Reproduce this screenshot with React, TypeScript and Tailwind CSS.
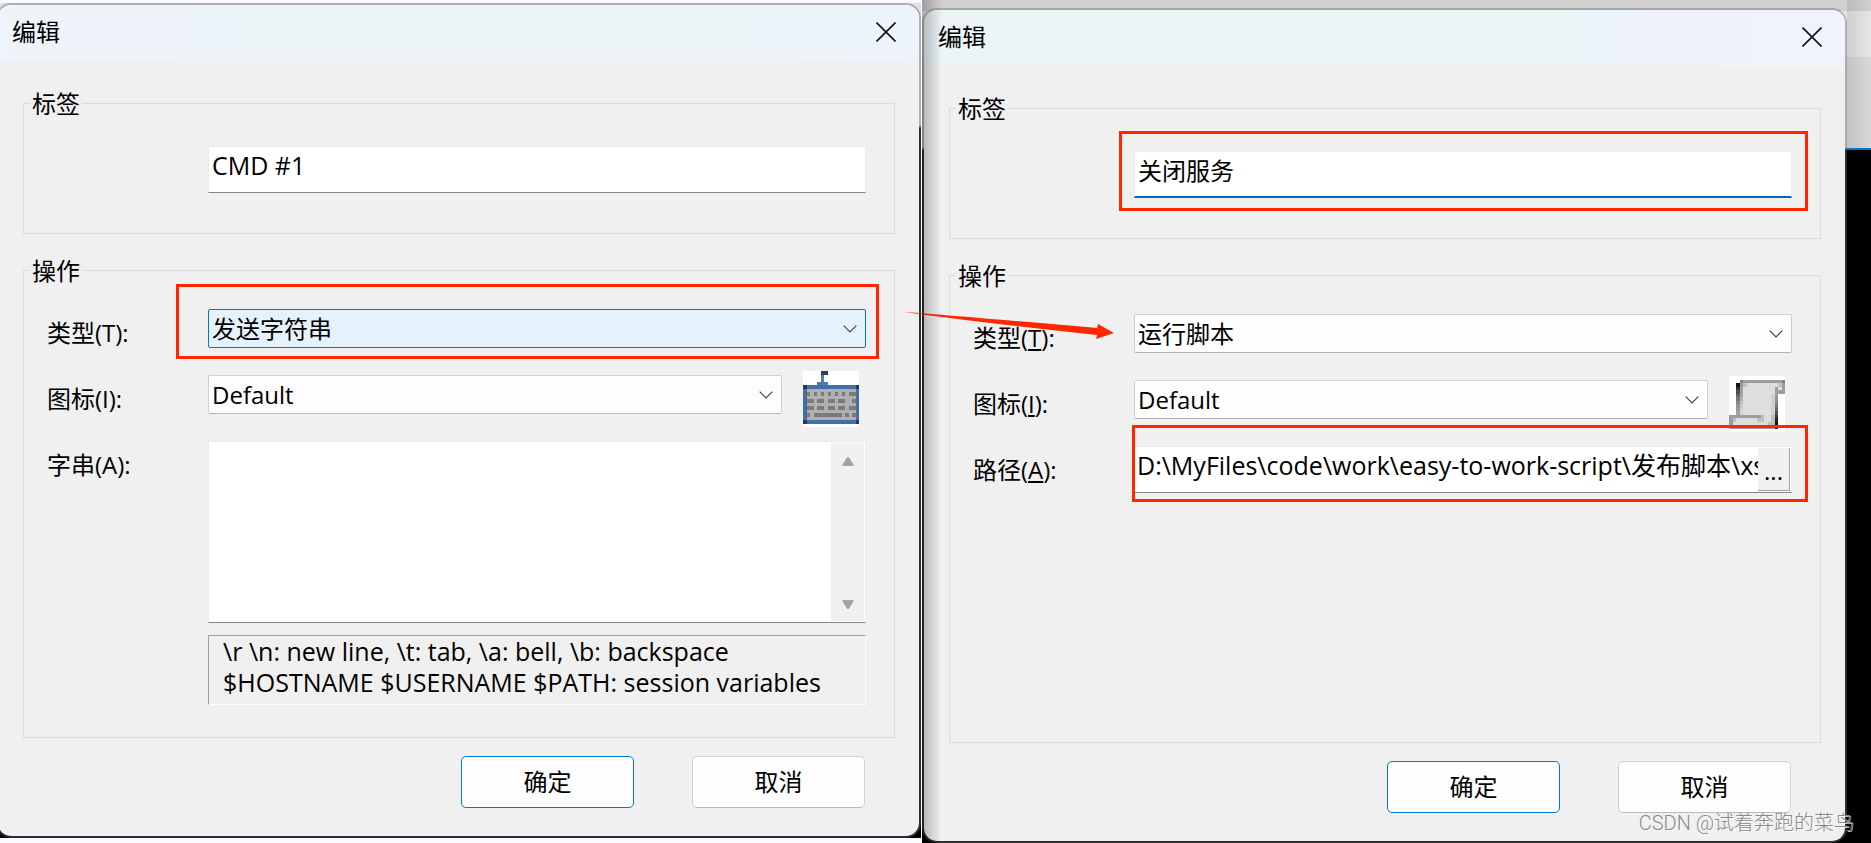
import { useState } from "react";
import type { ReactNode } from "react";

const CloseIcon = () => (
  <svg className="size-5" viewBox="0 0 20 20" fill="none" stroke="#111" strokeWidth="1.6">
    <path d="M0.5 0.5 19.5 19.5M19.5 0.5 0.5 19.5" />
  </svg>
);

const ChevronIcon = () => (
  <svg
    className="pointer-events-none absolute right-[9px] top-4 h-2 w-[14px]"
    viewBox="0 0 14 8"
    fill="none"
    stroke="#444"
    strokeWidth="1.2"
  >
    <path d="M0.7 0.7 7 7 13.3 0.7" />
  </svg>
);

// [x, y, width] of each key on the 16x16 keyboard bitmap
const keys = [
  [1, 6, 1], [3, 6, 1], [5, 6, 1], [7, 6, 1], [9, 6, 1], [11, 6, 1], [13, 6, 2],
  [1, 8, 2], [4, 8, 2], [7, 8, 2], [10, 8, 2], [14, 8, 1],
  [1, 10, 2], [4, 10, 2], [7, 10, 2], [10, 10, 2], [13, 10, 2],
  [1, 12, 1], [3, 12, 8], [12, 12, 1], [14, 12, 1],
];

const KeyboardIcon = () => (
  <svg className="size-14" viewBox="0 0 16 16" shapeRendering="crispEdges">
    <path fill="#fff" d="M0 0h16v16H0z" />
    <path fill="#4c7dac" d="M5 1h1v2H5zM4 3h3v1H4z" />
    <path fill="#243f5c" d="M5 0h2v1H5z" />
    <path fill="#4270a6" d="M0 4h16v11H0z" />
    <path fill="#b0b0b0" d="M1 5h14v9H1z" />
    <path fill="#243a55" d="M0 4h1v1H0zM15 4h1v1h-1zM0 14h1v1H0zM15 14h1v1h-1z" />
    {keys.map(([x, y, w]) => (
      <rect key={`${x}-${y}`} x={x} y={y} width={w} height="1" fill="#7b7b7b" />
    ))}
  </svg>
);

const leftShade = ["#111", "#333", "#4d4d4d", "#666", "#777", "#888", "#949494", "#9b9b9b", "#a0a0a0"];
const foldShade = ["#989c9e", "#9c9fa1", "#a2a2a2", "#aaa", "#b2b2b2", "#bcbcbc", "#c6c6c6", "#d0d0d0", "#d6d6d6"];
const rightShade = ["#9a9ea0", "#9a9ea0", "#989c9e", "#909496", "#888", "#777", "#666", "#505050", "#3a3a3a", "#222", "#111", "#111"];

const ScriptIcon = () => (
  <svg className="size-14" viewBox="0 0 16 16" shapeRendering="crispEdges">
    <path fill="#fff" d="M0 0h16v16H0z" />
    <path fill="#dedede" d="M4 2h9v12H4zM1 12h10v2H1zM13 2h2v2h-2z" />
    <path fill="#9a9ea0" d="M3 1h13v4h-2V4h1V2H3zM0 11h9v1H1v3H0zM1 14h12v1H1z" />
    <path fill="#808486" d="M3 1h1v1H3zM15 1h1v1h-1z" />
    <path fill="#bdbfc0" d="M4 2h1v1H4zM14 2h1v1h-1zM9 11h1v2H8v-1h1zM1 12h1v1H1zM12 11h1v3h-2v-1h1z" />
    <path fill="#cfcfcf" d="M12 5h1v6h-1z" />
    {leftShade.map((c, i) => (
      <rect key={i} x="2" y={i + 2} width="1" height="1" fill={c} />
    ))}
    {foldShade.map((c, i) => (
      <rect key={i} x="3" y={i + 2} width="1" height="1" fill={c} />
    ))}
    {rightShade.map((c, i) => (
      <rect key={i} x="13" y={i + 3} width="1" height="1" fill={c} />
    ))}
  </svg>
);

const Arrow = () => (
  <svg
    className="pointer-events-none absolute -top-[5px] right-full mr-5 h-8 w-[212px]"
    viewBox="0 0 212 32"
    fill="#ff2600"
  >
    <path d="M2 3 Q70 8 195 19 L196 15 212 24 194 30 195 26 Q90 15 2 3Z" />
  </svg>
);

type DialogProps = {
  id: string;
  headerClass: string;
  children: ReactNode;
};

const Dialog = ({ id, headerClass, children }: DialogProps) => (
  <section
    aria-labelledby={id}
    className="rounded-[15px] border-2 border-[#6b6b6b6b] bg-[#f0f0f0] bg-clip-padding"
  >
    <header
      className={`flex h-14 items-center justify-between rounded-t-[13px] pb-[2px] pl-[14px] pr-[23px] ${headerClass}`}
    >
      <h1 id={id}>编辑</h1>
      <button type="button" aria-label="关闭">
        <CloseIcon />
      </button>
    </header>
    <form className="pb-7 pl-[25px] pr-6 pt-[26px]" onSubmit={(e) => e.preventDefault()}>
      {children}
      <div className="mt-[18px] flex justify-end gap-[58px] pr-[30px]">
        <button
          type="submit"
          className="h-[52px] w-[173px] rounded-[5px] border border-[#0078d4] bg-[#fdfdfd]"
        >
          确定
        </button>
        <button
          type="button"
          className="h-[52px] w-[173px] rounded-[5px] border border-[#d0d0d0] border-b-[#bbb] bg-[#fdfdfd]"
        >
          取消
        </button>
      </div>
    </form>
  </section>
);

const legendClass = "ml-[6px] h-8 px-[2px] pt-[3px] leading-7";
const rowClass = "flex items-start pl-[23px] pr-7";
const labelClass = "h-12 w-[161px] shrink-0 leading-[48px]";
const inputClass = "h-[47px] w-full min-w-0 border border-[#ebebeb] bg-white pb-[10px] pl-[3px] outline-none";

type SelectProps = {
  id: string;
  options: string[];
  active?: boolean;
  children?: ReactNode;
};

const Select = ({ id, options, active, children }: SelectProps) => (
  <div className="relative min-w-0 flex-1">
    <select
      id={id}
      className={`block h-[39px] w-full appearance-none rounded-[2px] border pl-[3px] outline-none ${
        active ? "border-[#0078c8] bg-[#e5f1fb]" : "border-[#d0d0d0] border-b-[#b5b5b5] bg-[#fdfdfd]"
      }`}
    >
      {options.map((o) => (
        <option key={o}>{o}</option>
      ))}
    </select>
    <ChevronIcon />
    {children}
  </div>
);

const SendStringDialog = () => {
  const [label, setLabel] = useState("CMD #1");
  const [text, setText] = useState("");

  return (
    <Dialog
      id="send-title"
      headerClass="bg-[linear-gradient(to_right,#eff3fb,#ecf4f8_30%,#ecf4f8_80%,#edf3fb)]"
    >
      <fieldset className="mb-5 min-w-0 border border-[#dcdcdc] pb-10">
        <legend className={legendClass}>标签</legend>
        <div className="pl-[184px] pr-7 pt-[27px]">
          <input
            aria-label="标签"
            className={`${inputClass} block border-b-[#858585] text-[25px]`}
            value={label}
            onChange={(e) => setLabel(e.target.value)}
          />
        </div>
      </fieldset>

      <fieldset className="min-h-[484px] min-w-0 border border-[#dcdcdc] pb-8">
        <legend className={legendClass}>操作</legend>
        <div className="flex flex-col gap-[18px] pt-[23px]">
          <div className={rowClass}>
            <label htmlFor="send-type" className={labelClass}>
              类型(T):
            </label>
            <Select id="send-type" options={["发送字符串", "运行脚本"]} active>
              <span className="pointer-events-none absolute -bottom-[11px] -left-8 -right-[13px] -top-[25px] border-[3px] border-[#ff2600]" />
            </Select>
          </div>
          <div className={rowClass}>
            <label htmlFor="send-icon" className={labelClass}>
              图标(I):
            </label>
            <Select id="send-icon" options={["Default"]} />
            <div className="-mb-4 -mt-1 ml-[21px] mr-[7px]">
              <KeyboardIcon />
            </div>
          </div>
          <div className={rowClass}>
            <label htmlFor="send-text" className={labelClass}>
              字串(A):
            </label>
            <div className="min-w-0 flex-1">
              <div className="flex h-[182px] border border-[#ebebeb] border-b-[#858585] bg-white pr-px">
                <textarea
                  id="send-text"
                  className="min-w-0 flex-1 resize-none px-1 outline-none"
                  value={text}
                  onChange={(e) => setText(e.target.value)}
                />
                <div className="my-px flex w-[33px] flex-col items-center justify-between bg-[#f0f0f0] pb-3 pt-[14px]">
                  <svg className="h-[9px] w-3" viewBox="0 0 12 9" fill="#a3a3a3">
                    <path d="M5 0.6Q6 -0.4 7 0.6L11.5 7.4Q11.8 9 11 9H1Q0.2 9 0.5 7.4Z" />
                  </svg>
                  <svg className="h-[9px] w-3" viewBox="0 0 12 9" fill="#a3a3a3">
                    <path d="M5 8.4Q6 9.4 7 8.4L11.5 1.6Q11.8 0 11 0H1Q0.2 0 0.5 1.6Z" />
                  </svg>
                </div>
              </div>
              <p className="mt-3 h-[70px] overflow-hidden whitespace-nowrap border border-b-white border-l-[#a0a0a0] border-r-white border-t-[#a0a0a0] pl-[14px] text-[25px] leading-[31px]">
                \r \n: new line, \t: tab, \a: bell, \b: backspace
                <br />
                $HOSTNAME $USERNAME $PATH: session variables
              </p>
            </div>
          </div>
        </div>
      </fieldset>
    </Dialog>
  );
};

const RunScriptDialog = () => {
  const [label, setLabel] = useState("关闭服务");
  const [path, setPath] = useState("D:\\MyFiles\\code\\work\\easy-to-work-script\\发布脚本\\xs");

  return (
    <Dialog
      id="run-title"
      headerClass="bg-[linear-gradient(to_right,#ecf4f8_70%,#eff3fb_90%)]"
    >
      <fieldset className="mb-5 min-w-0 border border-[#dcdcdc] pb-10">
        <legend className={legendClass}>标签</legend>
        <div className="pl-[184px] pr-7 pt-[27px]">
          <div className="relative">
            <input
              aria-label="标签"
              className={`${inputClass} block border-b-2 border-b-[#0067c0]`}
              value={label}
              onChange={(e) => setLabel(e.target.value)}
            />
            <span className="pointer-events-none absolute -bottom-[13px] -left-[15px] -right-4 -top-5 border-[3px] border-[#ff2600]" />
          </div>
        </div>
      </fieldset>

      <fieldset className="min-h-[484px] min-w-0 border border-[#dcdcdc] pb-8">
        <legend className={legendClass}>操作</legend>
        <div className="flex flex-col gap-[18px] pt-[23px]">
          <div className={rowClass}>
            <label htmlFor="run-type" className={labelClass}>
              类型(<u>T</u>):
            </label>
            <Select id="run-type" options={["运行脚本", "发送字符串"]}>
              <Arrow />
            </Select>
          </div>
          <div className={rowClass}>
            <label htmlFor="run-icon" className={labelClass}>
              图标(<u>I</u>):
            </label>
            <Select id="run-icon" options={["Default"]} />
            <div className="-mb-4 -mt-1 ml-[21px] mr-[7px]">
              <ScriptIcon />
            </div>
          </div>
          <div className={rowClass}>
            <label htmlFor="run-path" className={labelClass}>
              路径(<u>A</u>):
            </label>
            <div className="relative flex h-[47px] min-w-0 flex-1 border border-[#ebebeb] border-b-[#858585] bg-white pr-px pt-px">
              <input
                id="run-path"
                className="min-w-0 flex-1 pb-[10px] pl-[2px] text-[25px] outline-none"
                value={path}
                onChange={(e) => setPath(e.target.value)}
              />
              <button
                type="button"
                aria-label="浏览"
                className="mb-px w-8 border-b border-r border-[#a0a0a0] bg-[#f0f0f0] pt-1"
              >
                ...
              </button>
              <span className="pointer-events-none absolute -bottom-[10px] -left-[3px] -right-[17px] -top-[22px] border-[3px] border-[#ff2600]" />
            </div>
          </div>
        </div>
      </fieldset>
    </Dialog>
  );
};

const App = () => {
  return (
    <main className="grid min-h-screen grid-cols-[922fr_949fr] overflow-hidden font-['Open_Sans','Noto_Sans_CJK_SC',sans-serif] text-[24px] leading-8 text-black">
      {/* Send string */}
      <div className="min-w-0 border-r border-white bg-[linear-gradient(to_bottom,#f9faff_3px,#e0e0e0_3px,#e0e0e0_126px,#0078c8_126px,#0078c8_128px,#000_128px,#000_calc(100%-5px),#fbfbff_calc(100%-5px))] pb-[5px] pt-[3px]">
        <div className="-ml-1">
          <SendStringDialog />
        </div>
      </div>

      {/* Run script */}
      <div className="relative min-w-0 bg-[linear-gradient(to_bottom,#d0d0d0_11px,#e6e6e6_11px,#e6e6e6_57px,#d8d8d8_57px,#d8d8d8_148px,#0078c8_148px,#0078c8_150px,#000_150px)] pr-6 pt-2">
        <div className="pointer-events-none absolute right-0 top-0 h-[148px] w-6 bg-linear-to-r from-black/10 to-transparent" />
        <div className="pointer-events-none absolute inset-y-0 left-0 w-5 bg-linear-to-r from-black/25 to-transparent z-10" />
        <RunScriptDialog />
        <p className="pointer-events-none absolute bottom-1 right-[17px] whitespace-nowrap font-['Roboto','Noto_Sans_CJK_SC',sans-serif] text-[20px] font-light text-[#8a8a8a] [text-shadow:1px_1px_0_#ffffffb0]">
          CSDN @试着奔跑的菜鸟
        </p>
      </div>
    </main>
  );
};

export default App;
